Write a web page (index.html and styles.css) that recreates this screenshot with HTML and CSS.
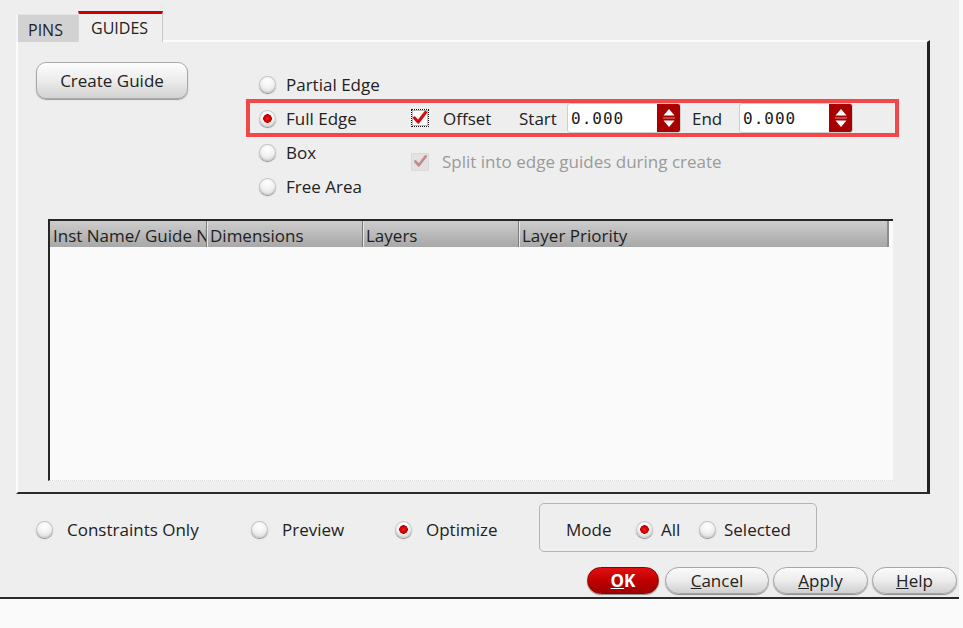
FILE: index.html
```html
<!DOCTYPE html>
<html>
<head>
<meta charset="utf-8">
<link rel="stylesheet" href="styles.css">
</head>
<body>
<div class="dialog">
  <div class="tabs">
    <div class="tab">PINS</div>
    <div class="tab active">GUIDES</div>
  </div>
  <div class="panel">
    <div class="top">
      <button class="btn create">Create Guide</button>
      <div class="options">
        <div class="row">
          <span class="radio"></span><span class="lbl">Partial Edge</span>
        </div>
        <div class="row hl">
          <div class="col1"><span class="radio on"></span><span class="lbl">Full Edge</span></div>
          <span class="check focus"><svg viewBox="0 0 16 16" width="16" height="16"><path d="M2.5 8 L6.2 12 L13.5 2.5" fill="none" stroke="#d01010" stroke-width="3.2" stroke-linecap="round" stroke-linejoin="round"/></svg></span>
          <span class="lbl offset">Offset</span>
          <span class="lbl start">Start</span>
          <div class="spin"><span class="val">0.000</span><span class="arrows"><svg viewBox="0 0 24 30" width="24" height="30"><path d="M6.5 12.5 L12 6 L17.5 12.5 Z" fill="#fff"/><rect x="6" y="14.5" width="12" height="1" fill="#d88"/><path d="M6.5 17.5 L12 24 L17.5 17.5 Z" fill="#fff"/></svg></span></div>
          <span class="lbl end">End</span>
          <div class="spin"><span class="val">0.000</span><span class="arrows"><svg viewBox="0 0 24 30" width="24" height="30"><path d="M6.5 12.5 L12 6 L17.5 12.5 Z" fill="#fff"/><rect x="6" y="14.5" width="12" height="1" fill="#d88"/><path d="M6.5 17.5 L12 24 L17.5 17.5 Z" fill="#fff"/></svg></span></div>
        </div>
        <div class="row">
          <div class="col1"><span class="radio"></span><span class="lbl">Box</span></div>
          <div class="split">
            <span class="check dis"><svg viewBox="0 0 16 16" width="15" height="15"><path d="M2.5 8 L6.2 12 L13.5 2.5" fill="none" stroke="#c48a8a" stroke-width="2.8" stroke-linecap="round" stroke-linejoin="round"/></svg></span>
            <span class="lbl gray">Split into edge guides during create</span>
          </div>
        </div>
        <div class="row">
          <span class="radio"></span><span class="lbl">Free Area</span>
        </div>
      </div>
    </div>
    <div class="table">
      <div class="thead">
        <div class="th c1">Inst Name/ Guide Name</div>
        <div class="th c2">Dimensions</div>
        <div class="th c3">Layers</div>
        <div class="th c4">Layer Priority</div>
      </div>
      <div class="tbody"></div>
    </div>
  </div>
  <div class="bottom">
    <div class="opt o1"><span class="radio"></span><span class="lbl">Constraints Only</span></div>
    <div class="opt o2"><span class="radio"></span><span class="lbl">Preview</span></div>
    <div class="opt o3"><span class="radio on"></span><span class="lbl">Optimize</span></div>
    <div class="mode">
      <span class="modelbl">Mode</span>
      <span class="radio on"></span><span class="lbl all">All</span>
      <span class="radio"></span><span class="lbl">Selected</span>
    </div>
  </div>
  <div class="buttons">
    <button class="btn pill ok"><u>O</u>K</button>
    <button class="btn pill cancel"><u>C</u>ancel</button>
    <button class="btn pill apply"><u>A</u>pply</button>
    <button class="btn pill help"><u>H</u>elp</button>
  </div>
</div>
</body>
</html>
```

FILE: styles.css
```css
* { box-sizing: border-box; }
html, body { margin: 0; padding: 0; }
body {
  background: #fafafa;
  font-family: "Open Sans", "Noto Sans", sans-serif;
  font-size: 17px;
  color: #222;
}
.dialog {
  background: #eeeeee;
  height: 599px;
  width: 959px;
  border-bottom: 2px solid #2a2a2a;
  padding-top: 11px;
}
.tabs {
  display: flex;
  margin-left: 16px;
  position: relative;
  z-index: 1;
  margin-bottom: -2px;
}
.tab {
  height: 28px;
  margin-top: 3px;
  width: 62px;
  background: #d2d2d2;
  border-top: 1px solid #e4e4e4;
  border-left: 2px solid #f6f6f6;
  font-size: 16px;
  padding-left: 10px;
  line-height: 30px;
}
.tab.active {
  margin-top: 0;
  height: 31px;
  width: 85px;
  background: #efefef;
  border-top: 3px solid #cc0000;
  border-left: 1px solid #d8d8d8;
  border-right: 1px solid #c8c8c8;
  padding-left: 12px;
  line-height: 28px;
}
.panel {
  margin-left: 16px;
  width: 914px;
  height: 454px;
  border-style: solid;
  border-width: 2px 3px 2px 2px;
  border-color: #fbfbfb #222 #2a2a2a #fbfbfb;
}
.top {
  display: flex;
  padding: 20px 0 0 18px;
}
.btn {
  font-family: inherit;
  font-size: 17px;
  color: #222;
  cursor: default;
}
.create {
  width: 152px;
  height: 37px;
  border-radius: 10px;
  border: 1px solid #a8a8a8;
  background: linear-gradient(#fdfdfd 0%, #ececec 50%, #d2d2d2 100%);
  box-shadow: 0 1px 1px #9a9a9a;
  padding: 0;
}
.options {
  margin-left: 71px;
  margin-top: 5px;
  display: flex;
  flex-direction: column;
}
.row {
  height: 34px;
  display: flex;
  align-items: center;
}
.row.hl {
  height: 38px;
  margin: -2px 0 -2px -13px;
  padding-left: 9px;
  width: 653px;
  border: 4px solid #f24848;
}
.col1 {
  width: 152px;
  display: flex;
  align-items: center;
}
.radio {
  width: 17px;
  height: 17px;
  border-radius: 50%;
  flex: none;
  background: radial-gradient(circle at 50% 30%, #ffffff 0%, #f2f2f2 45%, #cfcfcf 100%);
  box-shadow: inset 0 0 0 1px #c4c4c4, 0 1px 1px #8a8a8a;
  display: inline-block;
}
.radio.on {
  background:
    radial-gradient(circle at 50% 50%, #ff1a1a 0, #d00000 3px, #b00000 4px, transparent 4.6px),
    radial-gradient(circle at 50% 30%, #ffffff 0%, #f2f2f2 45%, #cfcfcf 100%);
}
.lbl { margin-left: 10px; white-space: nowrap; }
.check {
  width: 18px;
  height: 18px;
  flex: none;
  display: inline-flex;
  align-items: center;
  justify-content: center;
}
.check.focus {
  background: #fff;
  border: 1px dotted #111;
  box-shadow: inset 0 0 0 1px #bbb;
}
.check.dis {
  background: #e2e2e2;
  border: 1px solid #dadada;
}
.offset { margin-left: 14px; width: 76px; }
.start { margin-left: 0; width: 48px; }
.end { margin-left: 11px; width: 47px; }
.spin {
  width: 114px;
  height: 30px;
  display: flex;
  background: #fff;
  border: 1px solid #cfcfcf;
  border-radius: 3px;
  overflow: hidden;
}
.val {
  flex: 1;
  font-family: "DejaVu Sans Mono", monospace;
  font-size: 16px;
  letter-spacing: 1px;
  padding-left: 3px;
  padding-top: 1px;
  line-height: 28px;
  color: #1a1a1a;
}
.arrows {
  width: 24px;
  background: #a80000;
  border-radius: 0 3px 3px 0;
  display: flex;
  margin: -1px -1px -1px 0;
}
.split {
  align-self: flex-start;
  margin-top: 15px;
  display: flex;
  align-items: center;
}
.split .lbl { margin-left: 13px; }
.gray { color: #9a9a9a; }

.table {
  margin: 16px 0 0 30px;
  width: 845px;
  height: 262px;
  background: #fafafa;
  border-top: 2px solid #262626;
  border-left: 2px solid #262626;
  border-bottom: 1px dotted #dcdcdc;
}
.thead {
  display: flex;
  height: 26px;
  width: 839px;
  background: linear-gradient(#cdcdcd, #b2b2b2 70%, #a8a8a8);
  border-right: 2px solid #8c8c8c;
}
.th {
  font-size: 17px;
  line-height: 26px;
  padding: 2px 0 0 3px;
  white-space: nowrap;
  overflow: hidden;
  border-right: 1px solid #7a7a7a;
  box-shadow: 1px 0 0 #e6e6e6;
  color: #1e1e1e;
}
.c1 { width: 157px; }
.c2 { width: 156px; }
.c3 { width: 156px; }
.c4 { flex: 1; border-right: none; box-shadow: none; }

.bottom {
  display: flex;
  align-items: center;
  height: 49px;
  margin-top: 9px;
  padding-left: 36px;
}
.opt { display: flex; align-items: center; padding-top: 4px; }
.opt .lbl { margin-left: 14px; }
.o1 { width: 215px; }
.o2 { width: 144px; }
.o3 { width: 144px; }
.mode {
  width: 278px;
  height: 49px;
  border: 1px solid #b4b4b4;
  border-radius: 5px;
  display: flex;
  align-items: center;
  padding-left: 26px;
  padding-top: 4px;
}
.modelbl { width: 70px; white-space: nowrap; }
.mode .lbl.all { margin-left: 8px; width: 38px; }
.mode .lbl { margin-left: 8px; }

.buttons {
  display: flex;
  justify-content: flex-end;
  margin-top: 15px;
  padding-right: 2px;
  gap: 4px;
}
.pill {
  height: 27px;
  border-radius: 14px;
  border: 1px solid #a4a4a4;
  background: linear-gradient(#fbfbfb 0%, #ececec 50%, #cfcfcf 100%);
  box-shadow: 0 1px 1px #8c8c8c;
  padding: 0;
  line-height: 25px;
}
.ok {
  width: 72px;
  margin-right: 2px;
  border: 1px solid #900000;
  background: linear-gradient(#e01010 0%, #c00000 50%, #a00000 100%);
  color: #fff;
  font-weight: bold;
}
.cancel { width: 104px; }
.apply { width: 95px; }
.help { width: 85px; }
```
